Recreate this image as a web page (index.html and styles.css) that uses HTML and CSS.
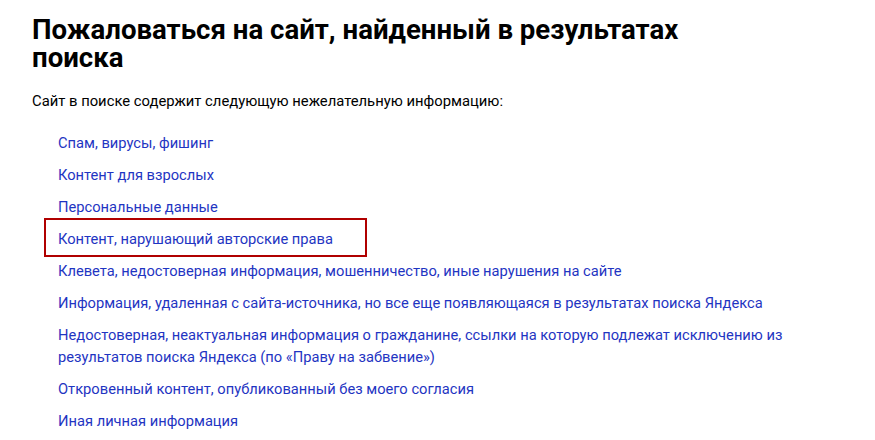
FILE: index.html
```html
<!DOCTYPE html>
<html lang="ru">
<head>
<meta charset="utf-8">
<link rel="stylesheet" href="styles.css">
</head>
<body>
<main class="page">
  <h1 class="title">Пожаловаться на сайт, найденный в результатах<br>поиска</h1>
  <p class="lead">Сайт в поиске содержит следующую нежелательную информацию:</p>
  <ul class="reasons">
    <li class="reason"><a href="#">Спам, вирусы, фишинг</a></li>
    <li class="reason"><a href="#">Контент для взрослых</a></li>
    <li class="reason"><a href="#">Персональные данные</a></li>
    <li class="reason reason--marked"><a href="#">Контент, нарушающий авторские права</a></li>
    <li class="reason"><a href="#">Клевета, недостоверная информация, мошенничество, иные нарушения на сайте</a></li>
    <li class="reason"><a href="#">Информация, удаленная с сайта-источника, но все еще появляющаяся в результатах поиска Яндекса</a></li>
    <li class="reason"><a href="#">Недостоверная, неактуальная информация о гражданине, ссылки на которую подлежат исключению из результатов поиска Яндекса (по «Праву на забвение»)</a></li>
    <li class="reason"><a href="#">Откровенный контент, опубликованный без моего согласия</a></li>
    <li class="reason"><a href="#">Иная личная информация</a></li>
  </ul>
</main>
</body>
</html>
```
FILE: styles.css
```css
html, body {
  margin: 0;
  padding: 0;
  background: #fff;
}
body {
  font-family: Roboto, "Noto Sans", sans-serif;
  color: #000;
}
.page {
  padding: 16px 0 0 32px;
  width: 780px;
}
.title {
  margin: 0;
  font-size: 27.6px;
  line-height: 28px;
  font-weight: 700;
}
.lead {
  margin: 18px 0 0;
  font-size: 14.8px;
  line-height: 22px;
}
.reasons {
  list-style: none;
  margin: 20px 0 0;
  padding: 0 0 0 26px;
  display: flex;
  flex-direction: column;
  gap: 10px;
}
.reason {
  font-size: 14.7px;
  line-height: 22px;
}
.reason a {
  color: #1f35c2;
  text-decoration: none;
}
.reason--marked {
  position: relative;
}
.reason--marked::after {
  content: "";
  position: absolute;
  top: -10px;
  bottom: -7px;
  left: -14px;
  width: 319px;
  border: 2px solid #b00000;
  pointer-events: none;
}
```
